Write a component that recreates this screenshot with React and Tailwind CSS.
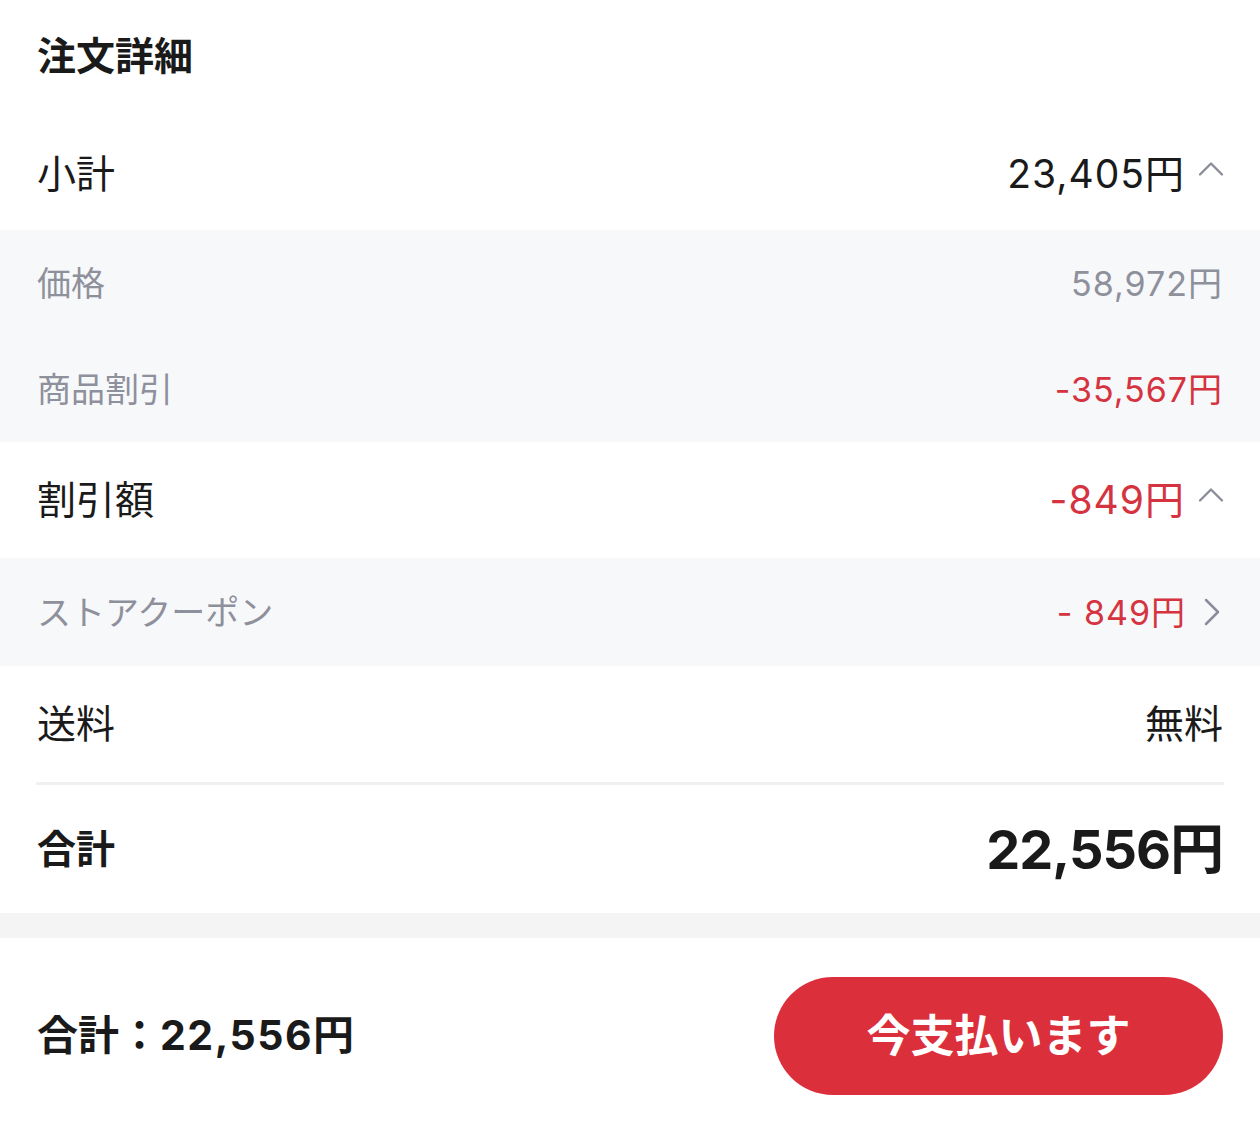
import { ChevronUp, ChevronRight } from 'lucide-react';

const font = { fontFamily: 'Inter, "Noto Sans CJK JP", sans-serif' };

function Row({ label, value, sub, valueClass = '', icon, height }) {
  return (
    <div className={`flex items-center justify-between px-[37px] ${height} ${sub ? 'bg-[#f7f8fa]' : 'bg-white'}`}>
      <span className={sub ? 'text-[34px] text-[#8e909c]' : 'text-[39px] text-[#1a1a1a]'}>{label}</span>
      <div className="flex items-center gap-[4px]">
        <span className={`tracking-[1px] ${valueClass}`}>{value}</span>
        {icon}
      </div>
    </div>
  );
}

const up = (
  <ChevronUp className="w-[44px] h-[44px] -mr-[10px] -mt-[10px] text-[#8a8d99]" strokeWidth={1.3} />
);

export default function App() {
  return (
    <div className="w-[1260px] h-[1148px] bg-white flex flex-col" style={font}>
      {/* order detail */}
      <div className="h-[118px] px-[37px] pb-[6px] flex items-center">
        <h1 className="text-[39px] font-bold text-[#1a1a1a]">注文詳細</h1>
      </div>

      <Row label="小計" value="23,405円" height="h-[112px]" valueClass="text-[39px] text-[#1a1a1a]" icon={up} />
      <Row label="価格" value="58,972円" sub height="h-[106px]" valueClass="text-[34px] text-[#8e909c]" />
      <Row label="商品割引" value="-35,567円" sub height="h-[106px]" valueClass="text-[34px] text-[#d5333f]" />
      <Row label="割引額" value="-849円" height="h-[116px]" valueClass="text-[39px] text-[#d5333f]" icon={up} />
      <Row
        label="ストアクーポン"
        value="- 849円"
        sub
        height="h-[108px]"
        valueClass="text-[34px] text-[#d5333f]"
        icon={<ChevronRight className="w-[48px] h-[48px] -mr-[13px] -ml-[2px] text-[#8a8d99]" strokeWidth={1.25} />}
      />
      <Row label="送料" value="無料" height="h-[116px]" valueClass="text-[39px] text-[#1a1a1a] tracking-normal" />

      <div className="mx-[36px] h-[3px] bg-[#f0f0f0]" />

      <div className="h-[128px] flex items-center justify-between px-[37px]">
        <span className="text-[39px] font-bold text-[#1a1a1a]">合計</span>
        <span className="text-[54px] font-bold text-[#1a1a1a] tracking-[-1px]">22,556円</span>
      </div>

      <div className="h-[25px] bg-[#f4f4f4]" />

      {/* bottom bar */}
      <div className="flex-1 flex items-center justify-between px-[37px] pb-[14px]">
        <span className="text-[41px] font-bold text-[#1a1a1a]">
          合計：<span className="tracking-[1.5px]">22,556円</span>
        </span>
        <button className="w-[449px] h-[118px] rounded-full bg-[#dc2f3c] text-white text-[44px] font-bold">
          今支払います
        </button>
      </div>
    </div>
  );
}
